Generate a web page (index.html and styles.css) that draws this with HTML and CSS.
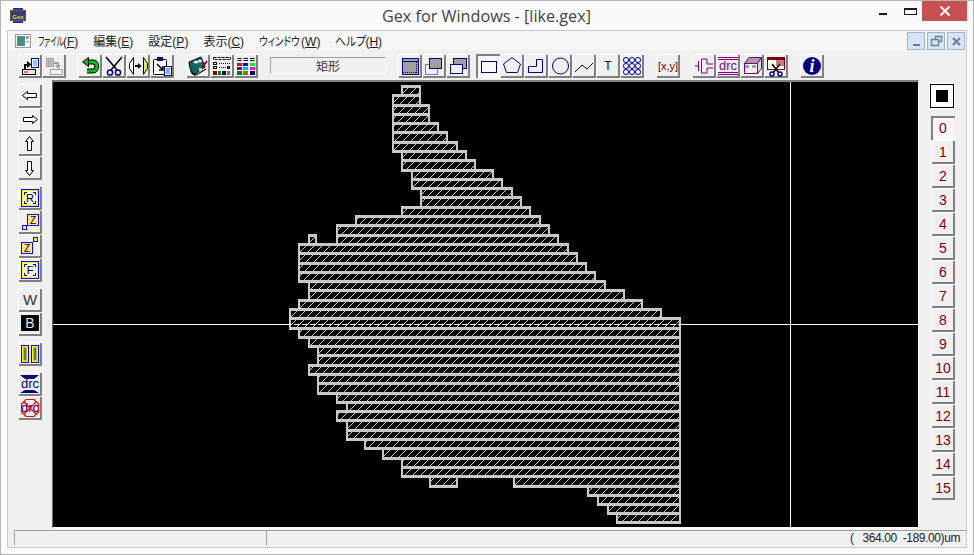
FILE: index.html

```html
<!DOCTYPE html>
<html>
<head>
    <title>Gex for Windows - [like.gex]</title>
    <link rel="stylesheet" href="styles.css">
</head>
<body>
<div class="window">
    <div class="titleBar">
        <svg class="appIcon" width="16" height="15" viewBox="0 0 16 15">
            <rect x="0" y="2" width="16" height="11" fill="#5a5a48"/>
            <rect x="3" y="0" width="10" height="2" fill="#2030c0"/>
            <rect x="3" y="13" width="10" height="2" fill="#2030c0"/>
            <rect x="1" y="3" width="14" height="9" fill="#3a3a70"/>
            <text x="8" y="10.5" class="appIconText">Gex</text>
        </svg>
        <div class="titleText">Gex for Windows - [like.gex]</div>
        <div class="winButtons">
            <div class="winMin"></div>
            <div class="winMax"></div>
            <div class="winClose">
                <svg width="10" height="10" viewBox="0 0 10 10"><path d="M0.5 0.5L9.5 9.5M9.5 0.5L0.5 9.5" stroke="#fff" stroke-width="2"/></svg>
            </div>
        </div>
    </div>

    <div class="frame">
        <div class="menuBar">
            <svg class="docIcon" width="16" height="14" viewBox="0 0 16 14">
                <rect x="0.5" y="0.5" width="15" height="13" fill="#fff" stroke="#9a9a9a"/>
                <rect x="2" y="2" width="8" height="10" fill="#4a8a88"/>
                <rect x="11" y="2" width="3" height="3" fill="#a0a0a0"/>
                <rect x="11" y="7" width="3" height="2" fill="#c0c0c0"/>
            </svg>
            <div class="menuItems">
                <span class="menuItem"><span class="kana file">ファイル</span>(<u>F</u>)</span>
                <span class="menuItem">編集(<u>E</u>)</span>
                <span class="menuItem">設定(<u>P</u>)</span>
                <span class="menuItem">表示(<u>C</u>)</span>
                <span class="menuItem"><span class="kana wind">ウィンドウ</span>(<u>W</u>)</span>
                <span class="menuItem"><span class="kana help">ヘルプ</span>(<u>H</u>)</span>
            </div>
            <div class="mdiButtons">
                <div class="mdiButton">
                    <svg width="17" height="17" viewBox="0 0 17 17"><rect x="5" y="11" width="7" height="2" fill="#6f7f8f"/></svg>
                </div>
                <div class="mdiButton">
                    <svg width="17" height="17" viewBox="0 0 17 17"><path d="M7.5 6V3.5H13.5V8.5H11M3.5 6.5H10.5V12.5H3.5Z" fill="none" stroke="#6f7f8f" stroke-width="1.4"/></svg>
                </div>
                <div class="mdiButton">
                    <svg width="17" height="17" viewBox="0 0 17 17"><path d="M5 5L12 12M12 5L5 12" stroke="#6f7f8f" stroke-width="2.2"/></svg>
                </div>
            </div>
        </div>

        <div class="toolBar">
            <div class="group">
                <button class="btn"><svg width="24" height="24" viewBox="0 0 24 24">
                    <rect x="13.5" y="4.5" width="7" height="9" fill="#fff" stroke="#000080"/>
                    <path d="M15 7H19M15 9H19M15 11H19" stroke="#00a0e0"/>
                    <path d="M6 15V10H9V7L13.5 10.5L9 14V12H8V15Z" fill="#000"/>
                    <rect x="4.5" y="15.5" width="13" height="5" fill="#e8e8e8" stroke="#000"/>
                    <path d="M6 18H10" stroke="#d00000"/>
                </svg></button>
                <button class="btn"><svg width="24" height="24" viewBox="0 0 24 24">
                    <rect x="4.5" y="4.5" width="7" height="8" fill="#d8d8d8" stroke="#a0a0a0"/>
                    <path d="M6.500 4V12M9 4V12M4 7H12M4 10H12" stroke="#a0a0a0"/>
                    <path d="M12 8H17V11H19L16 15L13 11H15V10H12Z" fill="#a0a0a0"/>
                    <rect x="8.500" y="15.500" width="12" height="5" fill="#f0f0f0" stroke="#a0a0a0"/>
                </svg></button>
            </div>
            <div class="group">
                <button class="btn"><svg width="24" height="24" viewBox="0 0 24 24">
                    <path d="M9 8H15C20 8 20 17 15 17H9" fill="none" stroke="#000" stroke-width="5"/>
                    <path d="M9 8H15C20 8 20 17 15 17H9" fill="none" stroke="#00c000" stroke-width="3"/>
                    <path d="M4.500 8L10.500 3.500V12.500Z" fill="#00c000" stroke="#000"/>
                </svg></button>
                <button class="btn"><svg width="24" height="24" viewBox="0 0 24 24">
                    <path d="M4 3L15 16M20 3L9 16" stroke="#000" stroke-width="1.6" fill="none"/>
                    <circle cx="8" cy="18.500" r="2.600" fill="none" stroke="#000080" stroke-width="1.5"/>
                    <circle cx="16" cy="18.500" r="2.600" fill="none" stroke="#000080" stroke-width="1.5"/>
                </svg></button>
                <button class="btn"><svg width="24" height="24" viewBox="0 0 24 24">
                    <path d="M7.500 3.500L3.500 9.500V14.500L7.500 20.500Z" fill="#fff" stroke="#000"/>
                    <path d="M17.500 3.500L21.500 9.500V14.500L17.500 20.500Z" fill="#f0e060" stroke="#000"/>
                    <path d="M9 12H12" stroke="#000" stroke-width="2"/>
                    <path d="M12 9L15.500 12L12 15Z" fill="#000"/>
                </svg></button>
                <button class="btn"><svg width="24" height="24" viewBox="0 0 24 24">
                    <rect x="3.500" y="5.500" width="13" height="15" rx="1" fill="#fff" stroke="#000"/>
                    <rect x="7" y="3" width="6" height="4" fill="#000080"/>
                    <path d="M7 10L13 16M13 12V16H9" fill="none" stroke="#000" stroke-width="1.500"/>
                    <rect x="14.500" y="12.500" width="7" height="9" fill="#fff" stroke="#000080"/>
                    <path d="M16 15H20M16 17H20M16 19H20" stroke="#0060c0"/>
                </svg></button>
            </div>
            <div class="group">
                <button class="btn"><svg width="24" height="24" viewBox="0 0 24 24">
                    <path d="M3 8L15 3L19 13L9 20C6 20 4 17 3 8Z" fill="#006868" stroke="#000"/>
                    <path d="M5 17C6 20 8 21 10 21L20 15" fill="none" stroke="#000" stroke-width="1.200"/>
                    <ellipse cx="10" cy="8" rx="2.500" ry="1.500" fill="#e8e8e8"/>
                    <ellipse cx="14" cy="7" rx="2" ry="1.500" fill="#e8e8e8"/>
                    <path d="M16 14L21 7" stroke="#a00000" stroke-width="2"/>
                    <rect x="13" y="14" width="3" height="3" fill="#ffe000"/>
                </svg></button>
                <button class="btn"><svg width="24" height="24" viewBox="0 0 24 24">
                    <rect x="3.500" y="3.500" width="17" height="2" fill="none" stroke="#000" stroke-dasharray="3 1"/>
                    <rect x="3.500" y="8.500" width="3" height="2" fill="#fff" stroke="#000"/>
                    <rect x="3.500" y="12.500" width="3" height="2" fill="#fff" stroke="#000"/>
                    <path d="M9 9.500H20M9 13.500H20" stroke="#000" stroke-dasharray="1 1"/>
                    <rect x="17" y="12" width="3" height="3" fill="#000080"/>
                    <rect x="3" y="17" width="4" height="4" fill="#800000"/>
                    <rect x="8" y="17" width="3" height="4" fill="#008000"/>
                    <rect x="12" y="17" width="4" height="4" fill="#000080"/>
                    <rect x="17" y="17" width="3" height="4" fill="#808000"/>
                </svg></button>
                <button class="btn"><svg width="24" height="24" viewBox="0 0 24 24">
                    <path d="M3.500 4.500H7.500M3.500 6.500H7.500M9.500 4.500H14M9.500 6.500H14M16 4.500H20.500M16 6.500H20.500" stroke="#000"/>
                    <rect x="3" y="9" width="5" height="3" fill="#ff0000"/>
                    <rect x="9" y="9" width="5" height="3" fill="#0000ff"/>
                    <rect x="16" y="9" width="5" height="3" fill="#00ff00"/>
                    <rect x="3" y="13" width="5" height="3" fill="#800080"/>
                    <rect x="9" y="13" width="5" height="3" fill="#00c0c0"/>
                    <rect x="16" y="13" width="5" height="3" fill="#ff00ff"/>
                    <rect x="3" y="17" width="5" height="4" fill="#008000"/>
                    <rect x="9" y="17" width="5" height="4" fill="#808000"/>
                    <rect x="16" y="17" width="5" height="4" fill="#000080"/>
                </svg></button>
            </div>
            <div class="shapeName">矩形</div>
            <div class="shapeTools">
                <div class="group">
                    <button class="btn"><svg width="24" height="24" viewBox="0 0 24 24">
                        <rect x="4.500" y="4.500" width="16" height="16" fill="#a0a0a0" stroke="#000080"/>
                        <path d="M4 7.500H21" stroke="#000080"/>
                        <path d="M18.500 8V20" stroke="#000080" stroke-dasharray="1 1"/>
                        <path d="M5 18.500H18" stroke="#000080" stroke-dasharray="1 1"/>
                    </svg></button>
                    <button class="btn"><svg width="24" height="24" viewBox="0 0 24 24">
                        <rect x="3.500" y="10.500" width="12" height="10" fill="none" stroke="#000080" stroke-dasharray="1 1"/>
                        <rect x="7.500" y="4.500" width="12" height="10" fill="#a0a0a0" stroke="#000080"/>
                    </svg></button>
                    <button class="btn"><svg width="24" height="24" viewBox="0 0 24 24">
                        <rect x="7.500" y="4.500" width="13" height="10" fill="#a0a0a0" stroke="#000080"/>
                        <rect x="4.500" y="10.500" width="12" height="9" fill="#f0f0f0" stroke="#000080"/>
                    </svg></button>
                </div>
                <div class="group">
                    <button class="btn pressed"><svg width="24" height="24" viewBox="0 0 24 24"><rect x="5.500" y="7.500" width="15" height="11" fill="none" stroke="#000080"/></svg></button>
                    <button class="btn"><svg width="24" height="24" viewBox="0 0 24 24"><path d="M12 3.500L20.500 10L17.500 18.500H6.500L3.500 10Z" fill="none" stroke="#000080"/></svg></button>
                    <button class="btn"><svg width="24" height="24" viewBox="0 0 24 24"><path d="M4.500 18.500V12.500H12.500V5.500H18.500V18.500Z" fill="none" stroke="#000080"/></svg></button>
                    <button class="btn"><svg width="24" height="24" viewBox="0 0 24 24"><circle cx="12.500" cy="12" r="8" fill="none" stroke="#000080"/></svg></button>
                    <button class="btn"><svg width="24" height="24" viewBox="0 0 24 24"><path d="M3 18L10 11L15 15L21 9" fill="none" stroke="#000080"/></svg></button>
                    <button class="btn"><svg width="24" height="24" viewBox="0 0 24 24"><text x="12" y="16" class="iconText" fill="#000080" font-size="12">T</text></svg></button>
                    <button class="btn"><svg width="24" height="24" viewBox="0 0 24 24">
                        <rect x="3" y="3" width="18" height="18" fill="#d8d8e8"/>
                        <g fill="#fff" stroke="#000080">
                            <circle cx="6" cy="6" r="2.500"/><circle cx="12" cy="6" r="2.500"/><circle cx="18" cy="6" r="2.500"/>
                            <circle cx="6" cy="12" r="2.500"/><circle cx="12" cy="12" r="2.500"/><circle cx="18" cy="12" r="2.500"/>
                            <circle cx="6" cy="18" r="2.500"/><circle cx="12" cy="18" r="2.500"/><circle cx="18" cy="18" r="2.500"/>
                        </g>
                    </svg></button>
                </div>
            </div>
            <button class="btn"><svg width="24" height="24" viewBox="0 0 24 24"><text x="12" y="16" class="iconText" fill="#800000" font-size="11">[x,y]</text></svg></button>
            <div class="group">
                <button class="btn"><svg width="24" height="24" viewBox="0 0 24 24">
                    <path d="M3 12H6M6.500 7V17M9.500 5V19M9.500 5H15V10H21M9.500 19H15V14H21" fill="none" stroke="#800080"/>
                </svg></button>
                <button class="btn"><svg width="24" height="24" viewBox="0 0 24 24">
                    <rect x="2" y="3" width="20" height="1" fill="#800080"/>
                    <rect x="2" y="5" width="20" height="1" fill="#800080"/>
                    <rect x="2" y="20" width="20" height="1" fill="#800080"/>
                    <rect x="2" y="18" width="20" height="1" fill="#800080"/>
                    <text x="12" y="16" class="iconText" fill="#800080" font-size="13">drc</text>
                </svg></button>
                <button class="btn"><svg width="24" height="24" viewBox="0 0 24 24">
                    <path d="M4.500 9.500L9 3.500H21.500L17.500 9.500Z" fill="#a0a0a0" stroke="#800080"/>
                    <path d="M17.500 9.500L21.500 3.500V14.500L17.500 19.500Z" fill="#e0d0e0" stroke="#800080"/>
                    <rect x="4.500" y="9.500" width="13" height="10" fill="#f0f0f0" stroke="#800080"/>
                    <rect x="5" y="11" width="4" height="3" fill="#a0a0a0"/>
                    <rect x="12" y="11" width="4" height="3" fill="#a0a0a0"/>
                </svg></button>
                <button class="btn"><svg width="24" height="24" viewBox="0 0 24 24">
                    <rect x="3.500" y="3.500" width="17" height="12" fill="#fff" stroke="#800000"/>
                    <rect x="12" y="4" width="8" height="8" fill="#c08080"/>
                    <path d="M4 4H20V6H4Z" fill="#800000"/>
                    <path d="M8 10L15 19M16 10L9 19" stroke="#000" stroke-width="1.500"/>
                    <circle cx="8" cy="20" r="2" fill="none" stroke="#000080" stroke-width="1.400"/>
                    <circle cx="16" cy="20" r="2" fill="none" stroke="#000080" stroke-width="1.400"/>
                </svg></button>
            </div>
            <button class="btn"><svg width="24" height="24" viewBox="0 0 24 24">
                <circle cx="12" cy="12" r="9" fill="#000080"/>
                <text x="12" y="18" class="infoText">i</text>
            </svg></button>
        </div>

        <div class="workArea">
            <div class="leftBar">
                <div class="stack">
                    <button class="btn"><svg width="24" height="24" viewBox="0 0 24 24"><path d="M4.500 11.500L9.500 7.500V9.500H18.500V13.500H9.500V15.500Z" fill="#fff" stroke="#000"/></svg></button>
                    <button class="btn"><svg width="24" height="24" viewBox="0 0 24 24"><path d="M19.500 11.500L14.500 7.500V9.500H5.500V13.500H14.500V15.500Z" fill="#fff" stroke="#000"/></svg></button>
                    <button class="btn"><svg width="24" height="24" viewBox="0 0 24 24"><path d="M11.500 4.500L7.500 9.500H9.500V18.500H13.500V9.500H15.500Z" fill="#fff" stroke="#000"/></svg></button>
                    <button class="btn"><svg width="24" height="24" viewBox="0 0 24 24"><path d="M11.500 19.500L7.500 14.500H9.500V5.500H13.500V14.500H15.500Z" fill="#fff" stroke="#000"/></svg></button>
                </div>
                <div class="stack">
                    <button class="btn"><svg width="24" height="24" viewBox="0 0 24 24">
                        <rect x="3.500" y="3.500" width="17" height="17" fill="#ffff00" stroke="#0000ff"/>
                        <rect x="5" y="5" width="14" height="14" fill="#f0f0f0"/>
                        <path d="M6.500 9V6.500H9M15 6.500H17.500V9M6.500 15V17.500H9M15 17.500H17.500V15" fill="none" stroke="#000"/>
                        <text x="12" y="16" class="iconText" fill="#000" font-size="11">R</text>
                    </svg></button>
                    <button class="btn"><svg width="24" height="24" viewBox="0 0 24 24">
                        <rect x="4.500" y="15.500" width="4" height="4" fill="#ffff00" stroke="#0000ff"/>
                        <rect x="9.500" y="4.500" width="11" height="11" fill="#ffe880" stroke="#0000ff"/>
                        <text x="15" y="14" class="iconText" fill="#000" font-size="10">Z</text>
                    </svg></button>
                    <button class="btn"><svg width="24" height="24" viewBox="0 0 24 24">
                        <rect x="15.500" y="3.500" width="4" height="4" fill="#ffff00" stroke="#0000ff"/>
                        <rect x="3.500" y="8.500" width="11" height="11" fill="#ffe880" stroke="#0000ff"/>
                        <text x="9" y="18" class="iconText" fill="#000" font-size="10">Z</text>
                    </svg></button>
                    <button class="btn"><svg width="24" height="24" viewBox="0 0 24 24">
                        <rect x="3.500" y="3.500" width="17" height="17" fill="#ffff00" stroke="#0000ff"/>
                        <rect x="5" y="5" width="14" height="14" fill="#f0f0f0"/>
                        <path d="M6.500 9V6.500H9M15 6.500H17.500V9M6.500 15V17.500H9M15 17.500H17.500V15" fill="none" stroke="#000"/>
                        <text x="12" y="16" class="iconText" fill="#000" font-size="11">F</text>
                    </svg></button>
                </div>
                <div class="stack">
                    <button class="btn"><svg width="24" height="24" viewBox="0 0 24 24"><text x="12" y="17" class="iconText" fill="#333" font-size="15">W</text></svg></button>
                    <button class="btn"><svg width="24" height="24" viewBox="0 0 24 24">
                        <rect x="3" y="3" width="18" height="16" fill="#000"/>
                        <text x="12" y="16" class="iconText" fill="#e8e8e8" font-size="14">B</text>
                    </svg></button>
                </div>
                <div class="stack">
                    <button class="btn"><svg width="24" height="24" viewBox="0 0 24 24">
                        <rect x="3.500" y="3.500" width="7" height="17" fill="#ffff00" stroke="#0000ff"/>
                        <rect x="13.500" y="3.500" width="7" height="17" fill="#ffff00" stroke="#0000ff"/>
                        <rect x="5.500" y="5.500" width="3" height="13" fill="#707070"/>
                        <rect x="15.500" y="5.500" width="3" height="13" fill="#707070"/>
                    </svg></button>
                </div>
                <div class="stack">
                    <button class="btn"><svg width="24" height="24" viewBox="0 0 24 24">
                        <path d="M2 3H21L16 7H7Z" fill="#000080"/>
                        <path d="M2 21H21L16 18H7Z" fill="#000080"/>
                        <text x="12" y="16" class="iconText" fill="#000080" font-size="13">drc</text>
                    </svg></button>
                    <button class="btn"><svg width="24" height="24" viewBox="0 0 24 24">
                        <text x="12" y="16" class="iconText" fill="#000080" font-size="13">drc</text>
                        <path d="M8 3.500H16L20.500 8V16L16 20.500H8L3.500 16V8Z" fill="none" stroke="#ff0000" stroke-width="1.200"/>
                        <path d="M6 6L18 18M18 6L6 18" stroke="#ff0000" stroke-width="1.200"/>
                    </svg></button>
                </div>
            </div>

            <div class="canvasBox">
                <svg class="canvas" width="865" height="445" viewBox="53 82 865 445">
                    <defs>
                        <pattern id="hatch" patternUnits="userSpaceOnUse" width="8" height="8">
                            <rect width="8" height="8" fill="#000"/>
                            <path d="M0 7h1v1h-1zM1 6h1v1h-1zM2 5h1v1h-1zM3 4h1v1h-1zM4 3h1v1h-1zM5 2h1v1h-1zM6 1h1v1h-1zM7 0h1v1h-1z" fill="#c8c8c8"/>
                        </pattern>
                    </defs>
                    <g stroke="#c8c8c8" stroke-width="2" shape-rendering="crispEdges">
                        <g fill="url(#hatch)">
                            <g id="rows">
                                <rect x="402" y="86" width="18" height="9"/>
                                <rect x="393" y="95" width="27" height="10"/>
                                <rect x="393" y="105" width="36" height="9"/>
                                <rect x="393" y="114" width="36" height="9"/>
                                <rect x="393" y="123" width="45" height="9"/>
                                <rect x="393" y="132" width="54" height="10"/>
                                <rect x="393" y="142" width="64" height="9"/>
                                <rect x="402" y="151" width="64" height="9"/>
                                <rect x="402" y="160" width="73" height="10"/>
                                <rect x="412" y="170" width="81" height="9"/>
                                <rect x="412" y="179" width="90" height="9"/>
                                <rect x="421" y="188" width="91" height="9"/>
                                <rect x="421" y="197" width="100" height="10"/>
                                <rect x="402" y="207" width="128" height="9"/>
                                <rect x="356" y="216" width="184" height="9"/>
                                <rect x="337" y="225" width="212" height="10"/>
                                <rect x="337" y="235" width="221" height="9"/>
                                <rect x="309" y="235" width="7" height="9"/>
                                <rect x="299" y="244" width="269" height="9"/>
                                <rect x="299" y="253" width="278" height="10"/>
                                <rect x="299" y="263" width="287" height="9"/>
                                <rect x="299" y="272" width="296" height="9"/>
                                <rect x="309" y="281" width="296" height="9"/>
                                <rect x="309" y="290" width="315" height="10"/>
                                <rect x="299" y="300" width="343" height="9"/>
                                <rect x="290" y="309" width="371" height="9"/>
                                <rect x="290" y="318" width="390" height="10"/>
                                <rect x="299" y="328" width="381" height="9"/>
                                <rect x="309" y="337" width="371" height="9"/>
                                <rect x="318" y="346" width="362" height="9"/>
                                <rect x="318" y="355" width="362" height="10"/>
                                <rect x="309" y="365" width="371" height="9"/>
                                <rect x="318" y="374" width="362" height="9"/>
                                <rect x="318" y="383" width="362" height="10"/>
                                <rect x="337" y="393" width="343" height="9"/>
                                <rect x="347" y="402" width="333" height="9"/>
                                <rect x="337" y="411" width="343" height="9"/>
                                <rect x="347" y="420" width="333" height="10"/>
                                <rect x="347" y="430" width="333" height="9"/>
                                <rect x="365" y="439" width="315" height="9"/>
                                <rect x="383" y="448" width="297" height="10"/>
                                <rect x="402" y="458" width="278" height="9"/>
                                <rect x="402" y="467" width="278" height="9"/>
                                <rect x="430" y="476" width="27" height="10"/>
                                <rect x="514" y="476" width="166" height="10"/>
                                <rect x="588" y="486" width="92" height="9"/>
                                <rect x="598" y="495" width="82" height="9"/>
                                <rect x="608" y="504" width="72" height="9"/>
                                <rect x="617" y="513" width="63" height="9"/>
                            </g>
                        </g>
                        <!-- second pass one pixel lower: the lines between rows are thicker than the sides -->
                        <use href="#rows" y="1" fill="none"/>
                    </g>
                    <g shape-rendering="crispEdges">
                        <path d="M53 324.500H918M790.500 82V527" stroke="#fff"/>
                        <path d="M292 324.500H679" stroke="#000" stroke-dasharray="2 6"/>
                    </g>
                </svg>
            </div>

            <div class="rightBar">
                <div class="colorSwatch"><div class="colorInner"></div></div>
                <div class="layers">
                    <button class="btn layer pressed">0</button>
                    <button class="btn layer">1</button>
                    <button class="btn layer">2</button>
                    <button class="btn layer">3</button>
                    <button class="btn layer">4</button>
                    <button class="btn layer">5</button>
                    <button class="btn layer">6</button>
                    <button class="btn layer">7</button>
                    <button class="btn layer">8</button>
                    <button class="btn layer">9</button>
                    <button class="btn layer">10</button>
                    <button class="btn layer">11</button>
                    <button class="btn layer">12</button>
                    <button class="btn layer">13</button>
                    <button class="btn layer">14</button>
                    <button class="btn layer">15</button>
                </div>
            </div>
        </div>

        <div class="statusBar">
            <div class="statusCell first"></div>
            <div class="statusCell coords">(   364.00  -189.00)um</div>
        </div>
    </div>
</div>
</body>
</html>
```

FILE: styles.css

```css
body {
    margin: 0;
    background-color: #fbfbfb;
    font-family: "Liberation Sans", sans-serif;
    overflow: hidden;
}

button {
    font-family: "Liberation Sans", sans-serif;
}

svg {
    display: block;
}

.window {
    box-sizing: border-box;
    width: 974px;
    height: 555px;
    border: 1px solid #b4b4b4;
    background-color: #fbfbfb;
}

.titleBar {
    display: flex;
    align-items: flex-start;
    height: 29px;
}

.appIcon {
    margin: 7px 0 0 9px;
}

.appIconText {
    font-family: "Liberation Sans", sans-serif;
    font-size: 6px;
    font-weight: bold;
    fill: #e0d040;
    text-anchor: middle;
}

.titleText {
    width: 209px;
    margin: 5px 0 0 356px;
    font-family: "Open Sans", sans-serif;
    font-size: 16.200px;
    line-height: 20px;
    color: #444;
    white-space: nowrap;
}

.winButtons {
    display: flex;
    margin-left: auto;
    margin-right: 6px;
}

.winMin {
    width: 8px;
    height: 2px;
    margin: 12px 17px 0 0;
    background-color: #1a1a1a;
}

.winMax {
    box-sizing: border-box;
    width: 13px;
    height: 7px;
    margin: 7px 5px 0 0;
    border: 1px solid #1a1a1a;
    border-top-width: 2px;
}

.winClose {
    display: flex;
    align-items: center;
    justify-content: center;
    width: 45px;
    height: 20px;
    background-color: #c75050;
}

.frame {
    box-sizing: border-box;
    width: 960px;
    height: 518px;
    margin-left: 6px;
    border: 1px solid #c8c8c8;
    background-color: #f0f0f0;
}

.menuBar {
    display: flex;
    align-items: center;
    height: 19px;
    background-color: #f5f6f8;
}

.docIcon {
    margin-left: 7px;
}

.menuItems {
    display: flex;
    gap: 15px;
    margin-left: 7px;
    font-family: "Liberation Sans", "Noto Sans CJK JP", sans-serif;
    font-size: 12px;
    color: #222;
    white-space: nowrap;
}

/* kana in the original bitmap font is much narrower than Noto, squeeze it */
.kana {
    display: inline-block;
    font-family: "Noto Sans CJK JP", sans-serif;
    font-feature-settings: "palt";
    transform-origin: left center;
}

.kana.file {
    width: 25px;
    transform: scaleX(0.62);
}

.kana.wind {
    width: 42px;
    transform: scaleX(0.8);
}

.kana.help {
    width: 30px;
    transform: scaleX(0.9);
}

.mdiButtons {
    display: flex;
    gap: 2px;
    margin-left: auto;
    margin-right: 1px;
}

.mdiButton {
    box-sizing: border-box;
    width: 18px;
    height: 18px;
    border: 1px solid #9cb4cc;
    background-color: #d8e6f4;
}

.toolBar {
    display: flex;
    gap: 12px;
    height: 26px;
    padding: 4px 0 0 10px;
}

.group {
    display: flex;
}

.shapeTools {
    display: flex;
    gap: 6px;
}

.btn {
    display: block;
    width: 24px;
    height: 24px;
    padding: 0;
    border: none;
    background-color: #f0f0f0;
    box-shadow: inset 1px 1px #fff, inset -2px -2px #808080;
}

.btn.pressed {
    background-color: #f8f8f8;
    box-shadow: inset 2px 2px #808080, inset -1px -1px #fff;
}

.iconText {
    font-family: "Liberation Sans", sans-serif;
    text-anchor: middle;
}

.infoText {
    font-family: "Liberation Serif", serif;
    font-size: 18px;
    font-weight: bold;
    font-style: italic;
    fill: #fff;
    text-anchor: middle;
}

.shapeName {
    box-sizing: border-box;
    width: 116px;
    height: 17px;
    margin-top: 3px;
    border: 1px solid;
    border-color: #a0a0a0 #fff #fff #a0a0a0;
    font-family: "Noto Sans CJK JP", sans-serif;
    font-size: 12px;
    line-height: 15px;
    text-align: center;
    color: #333;
}

.workArea {
    display: flex;
    height: 449px;
}

.leftBar {
    display: flex;
    flex-direction: column;
    gap: 6px;
    box-sizing: border-box;
    width: 44px;
    padding: 4px 0 0 10px;
}

.stack {
    display: flex;
    flex-direction: column;
}

.canvasBox {
    border-style: solid;
    border-width: 2px 1px 2px 1px;
    border-color: #808080 #fff #fff #696969;
}

.canvas {
    background-color: #000;
}

.rightBar {
    box-sizing: border-box;
    width: 47px;
    padding: 4px 0 0 11px;
}

.colorSwatch {
    box-sizing: border-box;
    width: 24px;
    height: 24px;
    padding: 5px;
    border: 1px solid #000;
    background-color: #fff;
    outline: 1px solid #fff;
}

.colorInner {
    width: 12px;
    height: 12px;
    background-color: #000;
}

.layers {
    display: flex;
    flex-direction: column;
    margin: 8px 0 0 1px;
}

.layer {
    font-size: 14px;
    line-height: 22px;
    color: #800000;
}

.statusBar {
    display: flex;
    box-sizing: border-box;
    height: 18px;
    padding: 1px 0 2px 6px;
}

.statusCell {
    box-sizing: border-box;
    height: 15px;
    border-top: 1px solid #a0a0a0;
    border-left: 1px solid #a0a0a0;
}

.statusCell.first {
    width: 252px;
}

.statusCell.coords {
    flex: 1;
    padding-right: 6px;
    font-size: 12px;
    line-height: 14px;
    letter-spacing: -0.4px;
    text-align: right;
    white-space: pre;
    color: #222;
}
```
